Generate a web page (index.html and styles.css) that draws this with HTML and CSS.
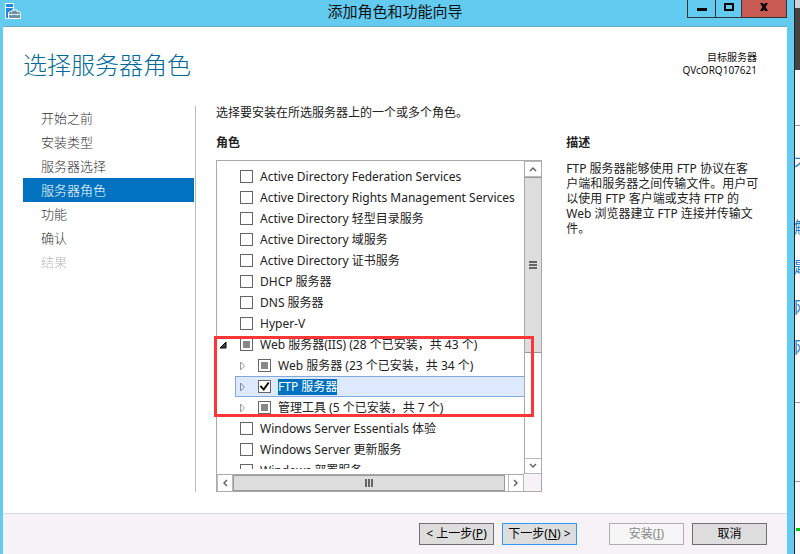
FILE: index.html
```
<!DOCTYPE html>
<html lang="zh-CN">
	<head>
		<meta charset="utf-8">
		<title>添加角色和功能向导</title>
		<link rel="stylesheet" href="styles.css">
	</head>
	<body>
		<div class="window">
			<div class="titlebar">
				<svg class="app-icon" width="17" height="17" viewBox="0 0 17 17">
					<path d="M.5.5h8v15h-8z" fill="#1e88dc" stroke="#fff"/>
					<path d="M1 4.5h7" stroke="#fff"/>
					<path d="M3.500 9.500l2-1h1.500v-1.500h5v1.500h1.500l2 1v6h-12z" fill="#6e8ea8" stroke="#fff"/>
					<path d="M4 11.500h12M6.500 10.500v2M12.500 10.500v2" stroke="#dfe9f0" fill="none"/>
				</svg>
				<h1 class="window-title">添加角色和功能向导</h1>
				<div class="window-buttons">
					<button class="win-btn" type="button" aria-label="最小化">
						<svg width="10" height="10" viewBox="0 0 10 10"><path d="M0 6h10v3H0z"/></svg>
					</button>
					<button class="win-btn win-max" type="button" aria-label="最大化">
						<svg width="10" height="10" viewBox="0 0 10 10"><path d="M1 2h8v6H1z" fill="none" stroke="#000" stroke-width="2"/></svg>
					</button>
					<button class="win-btn win-close" type="button" aria-label="关闭">
						<svg width="10" height="10" viewBox="0 0 10 10"><path d="M1 1h3l1 2 1-2h3L6.500 5 9 9H6L5 7 4 9H1l2.500-4z"/></svg>
					</button>
				</div>
			</div>

			<div class="page">
				<div class="page-header">
					<h2 class="page-title">选择服务器角色</h2>
					<div class="target">
						<div class="target-label">目标服务器</div>
						<div class="target-name">QVcORQ107621</div>
					</div>
				</div>

				<div class="page-body">
					<nav class="steps">
						<a class="step" href="#">开始之前</a>
						<a class="step" href="#">安装类型</a>
						<a class="step" href="#">服务器选择</a>
						<a class="step current" href="#">服务器角色</a>
						<a class="step" href="#">功能</a>
						<a class="step" href="#">确认</a>
						<a class="step disabled">结果</a>
					</nav>

					<div class="content">
						<p class="intro">选择要安装在所选服务器上的一个或多个角色。</p>
						<div class="columns">
							<div class="roles">
								<h3 class="section-title">角色</h3>
								<div class="listbox">
									<div class="viewport">
										<ul class="tree">
											<li class="row"><label><input class="check" type="checkbox">Active Directory Federation Services</label></li>
											<li class="row"><label><input class="check" type="checkbox">Active Directory Rights Management Services</label></li>
											<li class="row"><label><input class="check" type="checkbox">Active Directory 轻型目录服务</label></li>
											<li class="row"><label><input class="check" type="checkbox">Active Directory 域服务</label></li>
											<li class="row"><label><input class="check" type="checkbox">Active Directory 证书服务</label></li>
											<li class="row"><label><input class="check" type="checkbox">DHCP 服务器</label></li>
											<li class="row"><label><input class="check" type="checkbox">DNS 服务器</label></li>
											<li class="row"><label><input class="check" type="checkbox">Hyper-V</label></li>
											<li class="row expandable">
												<svg class="arrow" width="8" height="8" viewBox="0 0 8 8"><path d="M7 1v6H1z" fill="#444" stroke="#000"/></svg>
												<label><input class="check partial" type="checkbox">Web 服务器(IIS) (28 个已安装，共 43 个)</label>
											</li>
											<li class="row child">
												<svg class="arrow" width="8" height="10" viewBox="0 0 8 10"><path d="M1.500 1v8l4-4z" fill="#fff" stroke="#999"/></svg>
												<label><input class="check partial" type="checkbox">Web 服务器 (23 个已安装，共 34 个)</label>
											</li>
											<li class="row child selected">
												<svg class="arrow" width="8" height="10" viewBox="0 0 8 10"><path d="M1.500 1v8l4-4z" fill="none" stroke="#7a8aa5"/></svg>
												<label><input class="check" type="checkbox" checked><span class="marked">FTP 服务器</span></label>
											</li>
											<li class="row child">
												<svg class="arrow" width="8" height="10" viewBox="0 0 8 10"><path d="M1.500 1v8l4-4z" fill="#fff" stroke="#999"/></svg>
												<label><input class="check partial" type="checkbox">管理工具 (5 个已安装，共 7 个)</label>
											</li>
											<li class="row"><label><input class="check" type="checkbox">Windows Server Essentials 体验</label></li>
											<li class="row"><label><input class="check" type="checkbox">Windows Server 更新服务</label></li>
											<li class="row"><label><input class="check" type="checkbox">Windows 部署服务</label></li>
										</ul>
									</div>
									<div class="scroll scroll-v">
										<button class="scroll-btn" type="button" aria-label="向上滚动">
											<svg width="8" height="6" viewBox="0 0 8 6"><path d="M1 5l3-3 3 3"/></svg>
										</button>
										<div class="thumb">
											<svg width="8" height="9" viewBox="0 0 8 9"><path d="M0 1h8M0 4h8M0 7h8"/></svg>
										</div>
										<div class="track"></div>
										<button class="scroll-btn" type="button" aria-label="向下滚动">
											<svg width="8" height="6" viewBox="0 0 8 6"><path d="M1 1l3 3 3-3"/></svg>
										</button>
									</div>
									<div class="scroll scroll-h">
										<button class="scroll-btn" type="button" aria-label="向左滚动">
											<svg width="6" height="8" viewBox="0 0 6 8"><path d="M5 1L2 4l3 3"/></svg>
										</button>
										<div class="thumb">
											<svg width="9" height="8" viewBox="0 0 9 8"><path d="M1 0v8M4 0v8M7 0v8"/></svg>
										</div>
										<button class="scroll-btn" type="button" aria-label="向右滚动">
											<svg width="6" height="8" viewBox="0 0 6 8"><path d="M1 1l3 3-3 3"/></svg>
										</button>
									</div>
									<div class="corner"></div>
									<div class="highlight"></div>
								</div>
							</div>

							<div class="description">
								<h3 class="section-title">描述</h3>
								<p>FTP 服务器能够使用 FTP 协议在客户端和服务器之间传输文件。用户可以使用 FTP 客户端或支持 FTP 的 Web 浏览器建立 FTP 连接并传输文件。</p>
							</div>
						</div>
					</div>
				</div>

				<div class="footer">
					<button class="btn" type="button">&lt; 上一步(<u>P</u>)</button>
					<button class="btn default" type="button">下一步(<u>N</u>) &gt;</button>
					<button class="btn install" type="button" disabled>安装(<u>I</u>)</button>
					<button class="btn" type="button">取消</button>
				</div>
			</div>
		</div>

		<!-- edge of the page behind the wizard -->
		<div class="behind">
			<div class="behind-top"></div>
			<div class="behind-nav"></div>
			<div class="behind-space"></div>
			<div class="behind-links">
				<span class="first">不</span>
				<span>解</span>
				<span>题</span>
				<span>网</span>
				<span>网</span>
			</div>
			<div class="behind-box"></div>
			<div class="behind-mark"></div>
		</div>
	</body>
</html>
```
FILE: styles.css
```
* {
	box-sizing: border-box;
}

body {
	margin: 0;
	height: 100vh;
	display: flex;
	overflow: hidden;
	background: #fff;
	color: #222;
	font-family: "Noto Sans", "Noto Sans CJK SC", sans-serif;
	font-size: 12px;
}

h1, h2, h3, p, ul {
	margin: 0;
	padding: 0;
}

button {
	font: inherit;
	color: #000;
	padding: 0;
}

/* window frame */
.window {
	flex: 1;
	min-width: 0;
	display: flex;
	flex-direction: column;
	padding: 0 7px 0 3px;
	background: #63caf0;
	border-right: 1px solid #222;
}

.titlebar {
	height: 27px;
	flex: none;
	display: grid;
	grid-template-columns: 1fr auto 1fr;
	align-items: start;
	border-bottom: 1px solid #6fa5c4;
}

.app-icon {
	margin: 3px 2px;
}

.window-title {
	font-size: 15px;
	font-weight: normal;
	line-height: 22px;
	color: #111;
}

.window-buttons {
	justify-self: end;
	display: flex;
}

.win-btn {
	width: 28px;
	height: 18px;
	display: flex;
	align-items: center;
	justify-content: center;
	background: none;
	border: 1px solid #333;
	border-width: 0 0 1px 1px;
}

.win-btn svg {
	margin-bottom: 3px;
}

.win-max {
	width: 26px;
}

.win-close {
	width: 46px;
	background: #c75b54;
	border-right-width: 1px;
}

/* wizard page */
.page {
	flex: 1;
	min-height: 0;
	display: flex;
	flex-direction: column;
	background: #fff;
}

.page-header {
	display: flex;
	justify-content: space-between;
	padding: 21px 30px 0 20px;
	height: 79px;
}

.page-title {
	font-size: 24px;
	font-weight: 300;
	line-height: 34px;
	color: #00699b;
}

.target {
	padding-top: 2px;
	text-align: right;
	font-size: 10px;
	color: #111;
}

.target-label {
	line-height: 15px;
}

.target-name {
	line-height: 11px;
}

.page-body {
	flex: 1;
	min-height: 0;
	display: flex;
	padding: 0 20px 21px;
}

.steps {
	width: 173px;
	flex: none;
	padding-right: 1px;
	border-right: 1px solid #bbb;
}

.step {
	display: block;
	padding-left: 18px;
	font-size: 13px;
	font-weight: 300;
	line-height: 24px;
	color: #333;
	text-decoration: none;
}

.step.current {
	background: #0072c0;
	color: #fff;
}

.step.disabled {
	color: #bbb;
}

.content {
	flex: 1;
	min-width: 0;
	display: flex;
	flex-direction: column;
	padding-left: 20px;
}

.intro {
	line-height: 14px;
}

.columns {
	flex: 1;
	min-height: 0;
	display: flex;
	gap: 24px;
	padding-top: 14px;
}

.roles {
	flex: 13;
	min-width: 0;
	display: flex;
	flex-direction: column;
}

.description {
	flex: 8;
	min-width: 0;
}

.description p {
	padding: 1px 8px 0 0;
	line-height: 15px;
}

.section-title {
	font-size: 12px;
	line-height: 18px;
	padding-bottom: 8px;
}

/* role list */
.listbox {
	position: relative;
	flex: 1;
	min-height: 0;
	display: grid;
	grid-template-columns: 1fr 17px;
	grid-template-rows: 1fr 17px;
	border: 1px solid #aaa;
}

.viewport {
	min-width: 0;
	min-height: 0;
	display: flex;
	padding: 5px 0;
}

.tree {
	flex: 1;
	min-width: 0;
	overflow: hidden;
	list-style: none;
}

.row {
	height: 21px;
	display: flex;
	align-items: center;
	padding-left: 23px;
	white-space: nowrap;
}

.row label {
	display: flex;
	align-items: center;
	line-height: 16px;
}

.row.expandable {
	padding-left: 2px;
}

.expandable .arrow {
	margin-right: 13px;
}

.row.child {
	margin-left: 18px;
	padding-left: 3px;
	border: 1px solid transparent;
	border-right: 0;
}

.child .arrow {
	margin-right: 11px;
}

.row.selected {
	background: #dce9fe;
	border-color: #80a8dc;
}

.marked {
	background: #0072c0;
	color: #fff;
}

.check {
	appearance: none;
	width: 13px;
	height: 13px;
	margin: 0 7px 0 0;
	background: #fff;
	border: 1px solid #666;
	display: grid;
	place-items: center;
}

.check.partial::before {
	content: "";
	width: 7px;
	height: 7px;
	background: #888;
}

.check:checked::before {
	content: "";
	width: 10px;
	height: 9px;
	background: #111;
	clip-path: polygon(0 50%, 18% 36%, 40% 66%, 84% 0, 100% 10%, 44% 100%);
}

.scroll {
	display: flex;
	background: #fff;
}

.scroll-v {
	flex-direction: column;
	border-left: 1px solid #aaa;
}

.scroll-h {
	border-top: 1px solid #aaa;
}

.scroll-btn {
	flex: none;
	width: 16px;
	height: 16px;
	display: flex;
	align-items: center;
	justify-content: center;
	background: #fff;
	border: 1px solid #bbb;
	border-width: 1px 0;
}

.scroll-h .scroll-btn {
	border-width: 0 1px;
}

.scroll svg {
	fill: none;
	stroke: #666;
	stroke-width: 2;
}

.scroll .scroll-btn svg {
	stroke-width: 1.5;
}

.thumb {
	display: flex;
	align-items: center;
	justify-content: center;
	background: #ddd;
	border: 1px solid #999;
}

.scroll-v .thumb {
	flex: 5;
	border-width: 1px 0;
}

.track {
	flex: 3;
}

.scroll-h .thumb {
	flex: 1;
	margin-right: 3px;
}

.corner {
	background: #f6f2f6;
}

.highlight {
	position: absolute;
	top: 175px;
	left: -3px;
	right: 7px;
	height: 81px;
	border: 3px solid #fb3636;
	pointer-events: none;
}

/* buttons */
.footer {
	display: flex;
	justify-content: flex-end;
	gap: 8px;
	padding: 9px 20px;
	background: #f6f2f6;
	border-top: 1px solid #d8d8dc;
}

.btn {
	width: 75px;
	height: 22px;
	line-height: 20px;
	background: #ddd;
	border: 1px solid #707070;
}

.btn.default {
	border-color: #3399ff;
}

.btn.install {
	margin-left: 24px;
}

.btn:disabled {
	background: #f6f6f6;
	border-color: #b0b0b4;
	color: #888;
}

/* strip on the right */
.behind {
	width: 5px;
	flex: none;
	display: flex;
	flex-direction: column;
	overflow: hidden;
	background: #fefcff;
}

.behind-top {
	height: 8px;
	background: #ccd6da;
}

.behind-nav {
	height: 62px;
	background: #444;
}

.behind-space {
	height: 56px;
	border-bottom: 1px solid #999;
}

.behind-links {
	height: 277px;
	display: flex;
	flex-direction: column;
	padding-top: 18px;
	border-bottom: 1px solid #999;
	font-size: 16px;
	line-height: 40px;
	color: #1a7fc8;
}

.behind-links span {
	height: 40px;
	text-indent: -1px;
	white-space: nowrap;
}

.behind-links .first {
	height: 63px;
}

.behind-box {
	height: 79px;
	border-bottom: 1px solid #999;
}

.behind-mark {
	height: 3px;
	margin: 46px 0 0 1px;
	background: #00c818;
}
```
